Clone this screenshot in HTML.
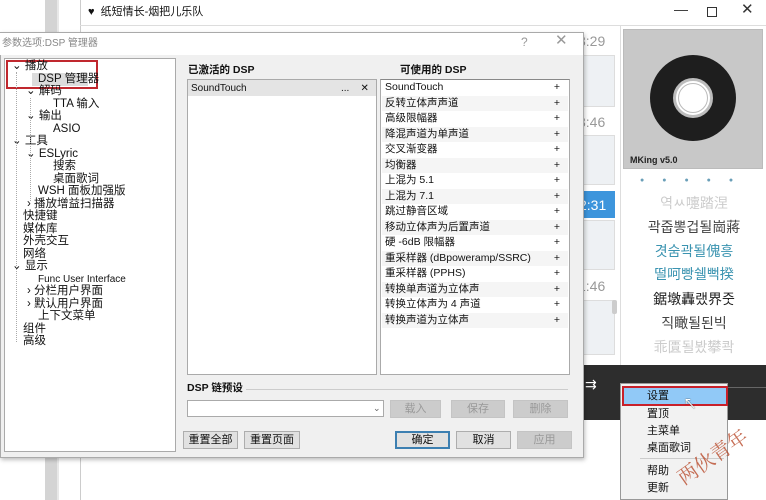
<!DOCTYPE html>
<html><head><meta charset="utf-8">
<style>
*{margin:0;padding:0;box-sizing:border-box}
body{width:766px;height:500px;overflow:hidden;position:relative;background:#fff;font-family:"Liberation Sans","Noto Sans CJK SC",sans-serif;font-size:11px;color:#111}
.a{position:absolute}
.t{position:absolute;white-space:nowrap;line-height:13px}
.btn{position:absolute;height:18px;background:#e1e1e1;border:1px solid #adadad;text-align:center;line-height:16px;font-size:11px}
.dis{color:#999;background:#ccc;border-color:#c4c4c4}
.row{position:absolute;left:0;width:186px;height:15.5px;line-height:15px;padding-left:3px;font-size:10.5px;white-space:nowrap}
.row span{position:absolute;right:8px;top:0}
.ly{position:absolute;left:622px;width:144px;text-align:center;font-size:14px;font-family:"Noto Sans CJK KR",sans-serif}
.tr .t{font-size:11.5px}
</style></head><body>
<div class="a" style="left:45px;top:0;width:12px;height:500px;background:#d4d4d4"></div>
<div class="a" style="left:57px;top:0;width:2px;height:500px;background:#e8e8e8"></div>
<div class="a" style="left:80px;top:0;width:686px;height:500px;background:#fff;border-left:1px solid #ccc"></div>
<div class="t" style="left:88px;top:6px;font-size:11px">♥&nbsp; 纸短情长-烟把儿乐队</div>
<div class="t" style="left:674px;top:3px;font-size:14px;color:#333">—</div>
<div class="a" style="left:707px;top:7px;width:10px;height:10px;border:1px solid #333"></div>
<div class="t" style="left:741px;top:3px;font-size:15px;color:#333">✕</div>
<div class="a" style="left:80px;top:25px;width:686px;height:1px;background:#ddd"></div>
<div class="t" style="left:578px;top:33px;font-size:14px;color:#999;line-height:16px">3:29</div>
<div class="a" style="left:583px;top:55px;width:32px;height:52px;background:#eef1f4;border:1px solid #ddd"></div>
<div class="t" style="left:578px;top:114px;font-size:14px;color:#999;line-height:16px">3:46</div>
<div class="a" style="left:583px;top:135px;width:32px;height:50px;background:#eef1f4;border:1px solid #ddd"></div>
<div class="a" style="left:578px;top:191px;width:37px;height:27px;background:#3d95dc"></div>
<div class="t" style="left:579px;top:197px;font-size:14px;color:#fff;line-height:16px">2:31</div>
<div class="a" style="left:583px;top:220px;width:32px;height:50px;background:#eef1f4;border:1px solid #ddd"></div>
<div class="t" style="left:578px;top:278px;font-size:14px;color:#999;line-height:16px">1:46</div>
<div class="a" style="left:583px;top:300px;width:32px;height:55px;background:#eef1f4;border:1px solid #ddd"></div>
<div class="a" style="left:612px;top:300px;width:5px;height:14px;background:#ccc;border-radius:2px"></div>
<div class="a" style="left:620px;top:26px;width:1px;height:340px;background:#ddd"></div>
<div class="a" style="left:623px;top:29px;width:140px;height:140px;background:#c8c8c8;border:1px solid #bbb"></div>
<div class="a" style="left:650px;top:55px;width:86px;height:86px;border-radius:50%;background:#1e1e1e"></div>
<div class="a" style="left:673px;top:78px;width:40px;height:40px;border-radius:50%;background:#fff;border:3px solid #bdbdbd"></div>
<div class="a" style="left:678px;top:83px;width:30px;height:30px;border-radius:50%;border:1px solid #bbb"></div>
<div class="t" style="left:630px;top:154px;font-size:9px;font-weight:bold;color:#222">MKing v5.0</div>
<div class="t" style="left:640px;top:174px;font-size:7px;color:#6a9fb8;letter-spacing:18px">●●●●●</div>
<div class="ly" style="top:193px;color:#ccc">역ㅆ嚏踏涅</div>
<div class="ly" style="top:217px;color:#444">곽줍뽕겁될崗蔣</div>
<div class="ly" style="top:241px;color:#3a93b0">겻숨곽될傀흥</div>
<div class="ly" style="top:264px;color:#3a93b0">떨呵빵쉘뻑揆</div>
<div class="ly" style="top:289px;color:#222">鋸墩轟랬界줏</div>
<div class="ly" style="top:313px;color:#444">직瞰될된빅</div>
<div class="ly" style="top:337px;color:#ccc">乖匱될봤攀콱</div>
<div class="a" style="left:577px;top:365px;width:189px;height:55px;background:#2d2d2d"></div>
<div class="t" style="left:585px;top:379px;color:#fff;font-size:14px;line-height:10px">⇉</div>
<div class="a" style="left:700px;top:387px;width:66px;height:1px;background:#666"></div>
<div class="a" style="left:620px;top:383px;width:108px;height:117px;background:#f2f2f2;border:1px solid #999"></div>
<div class="a" style="left:622px;top:386px;width:106px;height:20px;background:#91c9f7;border:2px solid #c8202a"></div>
<div class="t" style="left:647px;top:390px;font-size:11px">设置</div>
<div class="t" style="left:647px;top:408px">置顶</div>
<div class="t" style="left:647px;top:425px">主菜单</div>
<div class="t" style="left:647px;top:442px">桌面歌词</div>
<div class="a" style="left:640px;top:458px;width:84px;height:1px;background:#ccc"></div>
<div class="t" style="left:647px;top:465px">帮助</div>
<div class="t" style="left:647px;top:482px">更新</div>
<div class="t" style="left:683px;top:398px;font-size:14px;color:#fff;text-shadow:0 0 1px #000">↖</div>
<div class="t" style="left:672px;top:445px;font-size:20px;line-height:22px;color:#b5401f;opacity:.75;transform:rotate(-35deg);font-family:'Noto Serif CJK SC',serif">两伙青年</div>

<div class="a" style="left:0;top:32px;width:584px;height:426px;background:#f0f0f0;border:1px solid #aaa;box-shadow:1px 2px 4px rgba(0,0,0,.25)"></div>
<div class="a" style="left:0;top:33px;width:583px;height:22px;background:#fff"></div>
<div class="t" style="left:2px;top:37px;font-size:10px;color:#888">参数选项:DSP 管理器</div>
<div class="t" style="left:521px;top:36px;color:#999;font-size:12px">?</div>
<div class="t" style="left:555px;top:34px;color:#999;font-size:15px">✕</div>
<div class="a" style="left:4px;top:58px;width:172px;height:394px;background:#fff;border:1px solid #aaa"></div>
<div class="a" style="left:6px;top:60px;width:92px;height:29px;border:2px solid #c0282e"></div>
<div class="a" style="left:32px;top:73px;width:56px;height:13px;background:#dcdcdc"></div>
<div class="tr" style="position:absolute;left:0;top:0">
<div class="t" style="left:12px;top:60px">⌄ 播放</div>
<div class="t" style="left:38px;top:73px">DSP 管理器</div>
<div class="t" style="left:26px;top:85px">⌄ 解码</div>
<div class="t" style="left:53px;top:98px">TTA 输入</div>
<div class="t" style="left:26px;top:110px">⌄ 输出</div>
<div class="t" style="left:53px;top:123px">ASIO</div>
<div class="t" style="left:12px;top:135px">⌄ 工具</div>
<div class="t" style="left:26px;top:148px">⌄ ESLyric</div>
<div class="t" style="left:53px;top:160px">搜索</div>
<div class="t" style="left:53px;top:173px">桌面歌词</div>
<div class="t" style="left:38px;top:185px">WSH 面板加强版</div>
<div class="t" style="left:27px;top:198px">› 播放增益扫描器</div>
<div class="t" style="left:23px;top:210px">快捷键</div>
<div class="t" style="left:23px;top:223px">媒体库</div>
<div class="t" style="left:23px;top:235px">外壳交互</div>
<div class="t" style="left:23px;top:248px">网络</div>
<div class="t" style="left:12px;top:260px">⌄ 显示</div>
<div class="t" style="left:38px;top:273px;font-size:10px">Func User Interface</div>
<div class="t" style="left:27px;top:285px">› 分栏用户界面</div>
<div class="t" style="left:27px;top:298px">› 默认用户界面</div>
<div class="t" style="left:38px;top:310px">上下文菜单</div>
<div class="t" style="left:23px;top:323px">组件</div>
<div class="t" style="left:23px;top:335px">高级</div>
</div>
<div class="a" style="left:16px;top:72px;border-left:1px dotted #aaa;height:270px"></div>
<div class="a" style="left:30px;top:98px;border-left:1px dotted #aaa;height:103px"></div>
<div class="t" style="left:188px;top:64px;font-weight:bold;font-size:10.5px">已激活的 DSP</div>
<div class="a" style="left:187px;top:79px;width:190px;height:296px;background:#fff;border:1px solid #aaa"></div>
<div class="a" style="left:188px;top:80px;width:188px;height:16px;background:#e4e4e4"></div>
<div class="t" style="left:191px;top:82px;font-size:10px">SoundTouch</div>
<div class="t" style="left:341px;top:82px;font-size:10px">...&nbsp;&nbsp;&nbsp;&nbsp;✕</div>
<div class="t" style="left:400px;top:64px;font-weight:bold;font-size:10.5px">可使用的 DSP</div>
<div class="a" style="left:380px;top:79px;width:190px;height:296px;background:#fff;border:1px solid #aaa;border-top:1px solid #888"></div>
<div class="a" style="left:382px;top:80px;width:186px;height:290px">
<div class="row" style="top:0">SoundTouch<span>+</span></div>
<div class="row" style="top:15.5px;background:#f5f5f5">反转立体声声道<span>+</span></div>
<div class="row" style="top:31px">高级限幅器<span>+</span></div>
<div class="row" style="top:46.5px;background:#f5f5f5">降混声道为单声道<span>+</span></div>
<div class="row" style="top:62px">交叉渐变器<span>+</span></div>
<div class="row" style="top:77.5px;background:#f5f5f5">均衡器<span>+</span></div>
<div class="row" style="top:93px">上混为 5.1<span>+</span></div>
<div class="row" style="top:108.5px;background:#f5f5f5">上混为 7.1<span>+</span></div>
<div class="row" style="top:124px">跳过静音区域<span>+</span></div>
<div class="row" style="top:139.5px;background:#f5f5f5">移动立体声为后置声道<span>+</span></div>
<div class="row" style="top:155px">硬 -6dB 限幅器<span>+</span></div>
<div class="row" style="top:170.5px;background:#f5f5f5">重采样器 (dBpoweramp/SSRC)<span>+</span></div>
<div class="row" style="top:186px">重采样器 (PPHS)<span>+</span></div>
<div class="row" style="top:201.5px;background:#f5f5f5">转换单声道为立体声<span>+</span></div>
<div class="row" style="top:217px">转换立体声为 4 声道<span>+</span></div>
<div class="row" style="top:232.5px;background:#f5f5f5">转换声道为立体声<span>+</span></div>
</div>
<div class="t" style="left:187px;top:382px;font-weight:bold;font-size:10.5px">DSP 链预设</div>
<div class="a" style="left:246px;top:389px;width:322px;height:1px;background:#ccc"></div>
<div class="a" style="left:187px;top:400px;width:197px;height:17px;background:#fff;border:1px solid #aaa"></div>
<div class="t" style="left:373px;top:402px;font-size:9px;color:#666">⌄</div>
<div class="btn dis" style="left:390px;top:400px;width:51px">载入</div>
<div class="btn dis" style="left:451px;top:400px;width:54px">保存</div>
<div class="btn dis" style="left:513px;top:400px;width:55px">删除</div>
<div class="btn" style="left:183px;top:431px;width:55px">重置全部</div>
<div class="btn" style="left:244px;top:431px;width:56px">重置页面</div>
<div class="btn" style="left:395px;top:431px;width:55px;border:2px solid #3c7fb1;line-height:14px">确定</div>
<div class="btn" style="left:456px;top:431px;width:55px">取消</div>
<div class="btn dis" style="left:517px;top:431px;width:55px">应用</div>
</body></html>
